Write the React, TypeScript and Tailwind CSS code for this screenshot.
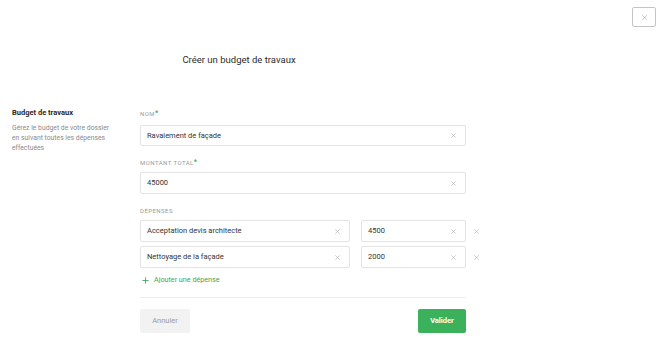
import React from "react";

const XIcon = ({ size = 6, color = "#b8b8b8" }: { size?: number; color?: string }) => (
  <svg width={size} height={size} viewBox="0 0 10 10" fill="none" stroke={color} strokeWidth="1.2" strokeLinecap="round">
    <path d="M1 1L9 9M9 1L1 9" />
  </svg>
);

const Label = ({ children, required }: { children: React.ReactNode; required?: boolean }) => (
  <div className="h-[8px] leading-[8px] text-[6px] tracking-[0.45px] text-[#9a9a9a] uppercase">
    {children}
    {required && <span className="text-[#3cb15b] text-[7px] font-bold align-top leading-[6px]">*</span>}
  </div>
);

const Field = ({ value, width, height = 22 }: { value: string; width: string; height?: number }) => (
  <div
    className={`${width} flex items-center justify-between border border-[#e4e4e4] rounded-[2px] bg-white pl-[6px] pr-[9px]`}
    style={{ height }}
  >
    <span className="text-[7.5px] text-[#333]">{value}</span>
    <XIcon size={5} />
  </div>
);

export default function App() {
  return (
    <div className="w-[670px] h-[342px] bg-white overflow-hidden" style={{ fontFamily: "Roboto, 'Liberation Sans', sans-serif" }}>
      <div className="flex justify-end pt-[7px] pr-[14px]">
        <button className="w-[24px] h-[20px] border border-[#c4c4c4] rounded-[2px] flex items-center justify-center bg-white">
          <XIcon size={5} color="#a0a0a0" />
        </button>
      </div>
      <div className="pl-[12px]">
        <div className="w-[454px]">
          <div className="mt-[27px] h-[12px] leading-[12px] text-center text-[9.5px] text-[#2b2b2b]">Créer un budget de travaux</div>
          <div className="flex items-start mt-[42px]">
            <div className="w-[128px] shrink-0">
              <div className="h-[10px] leading-[10px] text-[7.5px] font-bold text-[#2a2a2a]">Budget de travaux</div>
              <div className="mt-[5px] text-[6.8px] leading-[10px] text-[#8a8a8a]">
                Gérez le budget de votre dossier
                <br />
                en suivant toutes les dépenses
                <br />
                effectuées
              </div>
            </div>
            <div className="w-[340px] shrink-0 pt-[2px]">
              <Label required>Nom</Label>
              <div className="mt-[7px]">
                <Field value="Ravalement de façade" width="w-[326px]" height={21} />
              </div>
              <div className="mt-[13px]">
                <Label required>Montant total</Label>
              </div>
              <div className="mt-[5px]">
                <Field value="45000" width="w-[326px]" />
              </div>
              <div className="mt-[13px]">
                <Label>Dépenses</Label>
              </div>
              <div className="mt-[5px] flex flex-col gap-[4px]">
                {[
                  ["Acceptation devis architecte", "4500"],
                  ["Nettoyage de la façade", "2000"],
                ].map(([a, b]) => (
                  <div key={a} className="flex items-center">
                    <Field value={a} width="w-[210px]" />
                    <div className="ml-[11px]">
                      <Field value={b} width="w-[105px]" />
                    </div>
                    <div className="ml-[8px]">
                      <XIcon size={5} />
                    </div>
                  </div>
                ))}
              </div>
              <div className="mt-[7px] h-[10px] flex items-center text-[#3aa757] pl-[2px]">
                <svg width="7" height="7" viewBox="0 0 10 10" fill="none" stroke="#3aa757" strokeWidth="1.2">
                  <path d="M5 0.5V9.5M0.5 5H9.5" />
                </svg>
                <span className="ml-[5px] text-[7.2px]">Ajouter une dépense</span>
              </div>
              <div className="mt-[12px] w-[326px] h-px bg-[#ececec]" />
              <div className="mt-[11px] w-[326px] flex justify-between">
                <button className="w-[50px] h-[24px] rounded-[2px] bg-[#f2f2f2] text-[7.5px] text-[#9a9a9a]">Annuler</button>
                <button className="w-[48px] h-[24px] rounded-[2px] bg-[#3cb15b] text-[7.5px] font-bold text-white">Valider</button>
              </div>
            </div>
          </div>
        </div>
      </div>
    </div>
  );
}
